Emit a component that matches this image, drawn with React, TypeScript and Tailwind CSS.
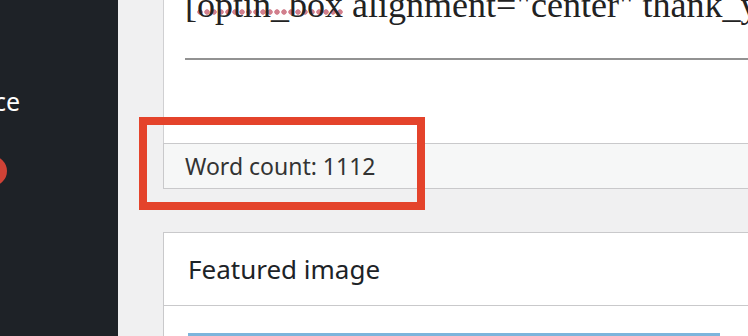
export default function App() {
  return (
    <div className="relative flex h-[336px] w-[748px] overflow-hidden bg-[#f0f0f1]">
      <aside className="h-full w-[118px] shrink-0 bg-[#1e2227]">
        <div className="ml-[-6px] mt-[84px] text-[25px] leading-[34px] text-white" style={{ fontFamily: '"Noto Sans", sans-serif' }}>
          ce
        </div>
        <div className="ml-[-23px] mt-[38px] h-[30px] w-[30px] rounded-full bg-[#cf4236]" />
      </aside>

      <main className="flex-1 pl-[45px]" style={{ fontFamily: '"Noto Sans", sans-serif' }}>
        <section className="h-[143px] overflow-hidden border-l border-[#d0d0d2] bg-white pl-[21px]">
          <p
            className="mt-[-15px] whitespace-nowrap text-[36px] leading-[40px] text-[#222]"
            style={{ fontFamily: '"Liberation Serif", serif' }}
          >
            [<span className="bg-[radial-gradient(circle_at_3px_3px,#d17f8d_2.4px,transparent_3px)] bg-[length:7px_7px] bg-[position:0_24px] bg-repeat-x">optin_box</span> alignment="center" thank_you_page="https://example.com"]
          </p>
          <hr className="mt-[33px] border-t-2 border-[#929292]" />
        </section>

        <div className="flex h-[46px] items-center border-y border-l border-[#c9c9cb] bg-[#f6f7f7] pl-[21px] text-[23px] text-[#333]">
          Word count: 1112
        </div>

        <section className="mt-[43px] border-l border-t border-[#c9c9cb] bg-white">
          <div className="flex h-[73px] items-center border-b border-[#c9c9cb] pl-[24px] text-[26px] text-[#1d2327]">
            Featured image
          </div>
          <div className="pl-[24px] pt-[27px]">
            <div className="h-[10px] w-[532px] bg-[#7db5dc]" />
          </div>
        </section>
      </main>

      <div className="pointer-events-none absolute left-[139px] top-[117px] h-[93px] w-[286px] border-[8px] border-[#e4432b]" />
    </div>
  );
}
